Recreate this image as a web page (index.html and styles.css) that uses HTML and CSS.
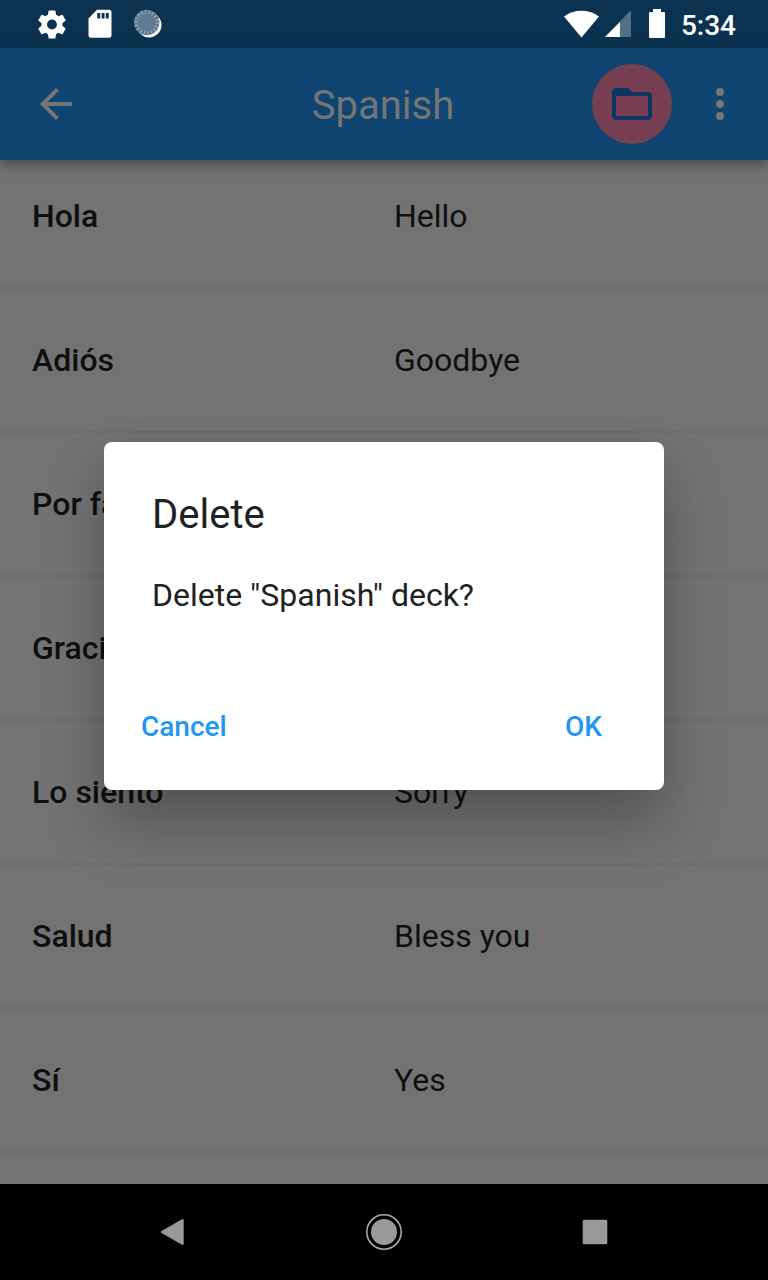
FILE: index.html
```html
<!DOCTYPE html>
<html lang="en">
<head>
<meta charset="utf-8">
<title>Spanish</title>
<link rel="stylesheet" href="styles.css">
</head>
<body>
<div class="screen">
  <header class="status-bar">
    <div class="status-left">
      <svg class="icon-gear" viewBox="2 2 20 20"><path d="M19.43 12.98c.04-.32.07-.64.07-.98s-.03-.66-.07-.98l2.11-1.65c.19-.15.24-.42.12-.64l-2-3.46c-.12-.22-.39-.3-.61-.22l-2.49 1c-.52-.4-1.08-.73-1.69-.98l-.38-2.65C14.46 2.18 14.25 2 14 2h-4c-.25 0-.46.18-.49.42l-.38 2.65c-.61.25-1.17.59-1.69.98l-2.49-1c-.23-.09-.49 0-.61.22l-2 3.46c-.13.22-.07.49.12.64l2.11 1.65c-.04.32-.07.65-.07.98s.03.66.07.98l-2.11 1.65c-.19.15-.24.42-.12.64l2 3.46c.12.22.39.3.61.22l2.49-1c.52.4 1.08.73 1.69.98l.38 2.65c.03.24.24.42.49.42h4c.25 0 .46-.18.49-.42l.38-2.65c.61-.25 1.17-.59 1.69-.98l2.49 1c.23.09.49 0 .61-.22l2-3.46c.12-.22.07-.49-.12-.64l-2.11-1.65zM12 15.5c-1.93 0-3.5-1.57-3.5-3.5s1.57-3.5 3.5-3.5 3.5 1.57 3.5 3.5-1.57 3.5-3.5 3.5z"/></svg>
      <svg class="icon-card" viewBox="0 0 24 30"><path fill-rule="evenodd" d="M9 .8h12q2.500 0 2.500 2.500v23q0 2.500-2.500 2.500H3q-2.500 0-2.500-2.500V9.500zM9.300 4v5.500h2.900V4zm4.300 0v5.500h2.900V4zm4.200 0v5.500h2.900V4z"/></svg>
      <svg class="icon-sync" viewBox="0 0 30 30"><circle cx="16" cy="16" r="12.500"/><circle class="sync-face" cx="13.700" cy="13.500" r="12.700"/><circle class="sync-ticks" cx="13.700" cy="13.500" r="10.500"/></svg>
    </div>
    <div class="status-right">
      <svg class="icon-wifi" viewBox="0 0 36 28"><path d="M0 6.500Q7.500 .8 17.500 .8T35 6.500L17.500 27.600z"/></svg>
      <svg class="icon-signal" viewBox="0 0 26 26"><path class="signal-faint" d="M25 0q1 0 1 1v24q0 1-1 1H0z"/><path d="M15 11v15H0z"/></svg>
      <svg class="icon-battery" viewBox="0 0 16 30"><path d="M4 0h8v3h3q1 0 1 1v24q0 1-1 1H1q-1 0-1-1V4q0-1 1-1h3z"/></svg>
      <span class="clock">5:34</span>
    </div>
  </header>
  <nav class="app-bar">
    <svg class="icon-back" viewBox="4 4 16 16"><path d="M20 11H7.830l5.590-5.590L12 4l-8 8 8 8 1.410-1.410L7.830 13H20z"/></svg>
    <h1 class="title">Spanish</h1>
    <span class="folder-button"><svg class="icon-folder" viewBox="2 4 20 16"><path d="M20 6h-8l-2-2H4c-1.100 0-1.990.9-1.990 2L2 18c0 1.100.9 2 2 2h16c1.100 0 2-.9 2-2V8c0-1.100-.9-2-2-2zm0 12H4V8h16z"/></svg></span>
    <svg class="icon-more" viewBox="0 0 8 32"><circle cx="4" cy="4" r="4"/><circle cx="4" cy="16" r="4"/><circle cx="4" cy="28" r="4"/></svg>
  </nav>
  <main class="cards">
    <div class="card-row"><b>Hola</b><span>Hello</span></div>
    <div class="card-row"><b>Adiós</b><span>Goodbye</span></div>
    <div class="card-row"><b>Por favor</b><span>Please</span></div>
    <div class="card-row"><b>Gracias</b><span>Thank you</span></div>
    <div class="card-row"><b>Lo siento</b><span>Sorry</span></div>
    <div class="card-row"><b>Salud</b><span>Bless you</span></div>
    <div class="card-row"><b>Sí</b><span>Yes</span></div>
  </main>
  <footer class="nav-bar">
    <svg viewBox="0 0 36 36"><path d="M6.500 17L27 5.300q1.700-.8 1.700 1v23.400q0 1.800-1.700 1L6.500 19q-1.800-1 0-2z"/></svg>
    <svg viewBox="0 0 36 36"><circle cx="18" cy="18" r="13"/><circle class="home-ring" cx="18" cy="18" r="17.200"/></svg>
    <svg viewBox="0 0 36 36"><rect x="5.700" y="5.700" width="24.600" height="24.600" rx="1.500"/></svg>
  </footer>
  <section class="dialog" role="dialog">
    <h2>Delete</h2>
    <p>Delete "Spanish" deck?</p>
    <div class="actions"><span>Cancel</span><span>OK</span></div>
  </section>
</div>
</body>
</html>
```
FILE: styles.css
```css
* { box-sizing: border-box; }
body { margin: 0; font-family: Roboto, sans-serif; }
h1, h2, p { margin: 0; font-weight: 400; }
svg { display: block; flex: none; fill: currentColor; }

.screen {
  position: relative;
  display: flex;
  flex-direction: column;
  width: 768px;
  height: 1280px;
  overflow: hidden;
  background: #737373;
}

.status-bar {
  display: flex;
  justify-content: space-between;
  height: 48px;
  padding: 0 32px 0 38px;
  background: #0b3351;
  color: #fff;
}
.status-left, .status-right { display: flex; align-items: center; }
.icon-gear { width: 28px; height: 29px; }
.icon-card { width: 24px; height: 30px; margin-left: 22px; }
.icon-sync { width: 30px; height: 30px; margin-left: 21px; }
.sync-face { fill: #5f7a91; }
.sync-ticks { fill: none; stroke: #a0b1bf; stroke-width: 4; stroke-dasharray: 1 2.665; }
.icon-wifi { width: 36px; height: 28px; }
.icon-signal { width: 26px; height: 26px; margin-left: 5px; }
.signal-faint { opacity: .3; }
.icon-battery { width: 16px; height: 30px; margin-left: 18px; }
.clock { margin: 3px 0 0 16px; font-size: 28px; font-weight: 500; line-height: 32px; }

.app-bar {
  z-index: 1;
  display: flex;
  align-items: center;
  height: 112px;
  padding: 0 44px 0 40px;
  background: #0f4570;
  color: #757575;
  box-shadow: 0 4px 8px -2px rgba(0, 0, 0, .2), 0 8px 10px rgba(0, 0, 0, .12), 0 2px 20px rgba(0, 0, 0, .1);
}
.icon-back { width: 32px; height: 32px; }
.title { flex: 1; padding: 4px 0 0 138px; text-align: center; font-size: 40px; line-height: 48px; }
.folder-button {
  display: grid;
  place-items: center;
  width: 80px;
  height: 80px;
  margin-left: 36px;
  border-radius: 50%;
  background: #773d50;
  color: #0b3660;
}
.icon-folder { width: 40px; height: 32px; }
.icon-more { width: 8px; height: 32px; margin-left: 44px; }

.cards { flex: 1; overflow: hidden; color: #0f0f0f; font-size: 32px; }
.card-row {
  display: grid;
  grid-template-columns: 362px 1fr;
  align-items: center;
  height: 144px;
  padding: 0 32px;
  border-bottom: 2px solid #6d6d6d;
}
.card-row:first-child { height: 129px; padding-bottom: 15px; }
.card-row b { font-weight: 500; }

.nav-bar {
  display: flex;
  align-items: center;
  justify-content: space-between;
  height: 96px;
  padding: 0 155px;
  background: #000;
  color: #999;
}
.nav-bar svg { width: 36px; height: 36px; }
.home-ring { fill: none; stroke: #aaa; stroke-width: 1.600; }

.dialog {
  position: absolute;
  z-index: 2;
  top: 442px;
  left: 104px;
  width: 560px;
  height: 348px;
  padding: 49px 62px 37px 37px;
  border-radius: 8px;
  background: #fff;
  color: #212121;
  box-shadow: 0 36px 60px rgba(0, 0, 0, .24), 0 4px 36px rgba(0, 0, 0, .06);
}
.dialog h2 { padding-left: 11px; font-size: 40px; line-height: 48px; }
.dialog p { padding: 38px 0 0 11px; font-size: 32px; line-height: 36px; }
.actions {
  display: flex;
  justify-content: space-between;
  padding-top: 98px;
  color: #2196f3;
  font-size: 28px;
  font-weight: 500;
  line-height: 32px;
}
```
